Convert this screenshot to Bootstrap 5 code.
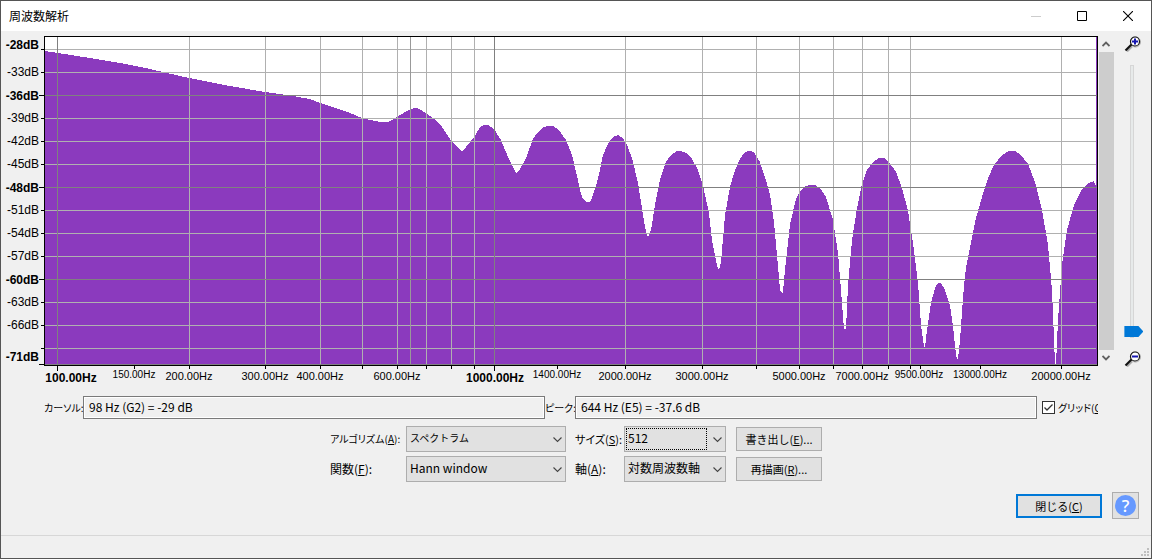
<!DOCTYPE html>
<html lang="ja">
<head>
<meta charset="utf-8">
<meta name="viewport" content="width=device-width, initial-scale=1">
<title>周波数解析</title>
<link href="https://cdn.jsdelivr.net/npm/bootstrap@5.3.0/dist/css/bootstrap.min.css" rel="stylesheet">
<style>
  body { background: #f0f0f0; color: #000; font: 12px/16px "Noto Sans CJK JP", sans-serif; font-feature-settings: "palt"; }
  .window-frame { border: 1px solid #555; }
  .title-bar { background: #fff; height: 30px; padding-left: 8px; }
  .title-bar h1 { font-size: 12px; line-height: 16px; font-weight: 400; font-feature-settings: normal; }
  .title-bar button { width: 46px; height: 30px; border: 0; padding: 0; background: none; display: flex; align-items: center; justify-content: center; }
  .chart-row { padding-top: 5px; }
  .spectrum { display: block; min-width: 0; flex: 1 1 0; height: auto; }
  .spectrum text { font-size: 12px; font-family: "Liberation Sans", sans-serif; }
  .spectrum .hz text { font-size: 11px; }
  .spectrum .major, .spectrum .hz .major { font-size: 12px; font-weight: 700; }
  .spectrum .hz .tiny { font-size: 10px; }
  .side-tools { width: 53px; padding-bottom: 20px; padding-left: 1px; }
  .pan-bar { width: 15px; }
  .pan-bar button { height: 16px; border: 0; padding: 0; background: none; display: flex; align-items: center; justify-content: center; }
  .pan-thumb { background: #cdcdcd; }
  .zoom-col { width: 38px; margin-bottom: -1px; }
  .zoom-col input { appearance: none; writing-mode: vertical-lr; direction: rtl; width: 20px; background: none; margin: 13px 0; min-height: 0; }
  .zoom-col input::-webkit-slider-runnable-track { width: 4px; background: #e7eaea; border: 1px solid #d6d6d6; }
  .zoom-col input::-webkit-slider-thumb { appearance: none; width: 19px; height: 11px; margin-left: -7px; background: #0078d7; clip-path: polygon(0 0, 74% 0, 100% 50%, 74% 100%, 0 100%); }
  .readouts { margin: 10px 53px 0 43px; height: 23px; overflow: hidden; }
  .readouts label { white-space: nowrap; font-size: 10px; flex: none; }
  .readouts input[type=text] { height: 23px; min-width: 0; flex: 1 1 0; border: 1px solid #7a7a7a; box-shadow: inset 0 0 0 1px #fff; background: #f0f0f0; padding: 0 5px 2px; border-radius: 0; color: #000; }
  .lab-cursor { width: 39px; }
  .lab-peak { width: 30px; }
  .grid-toggle { width: 61px; padding-left: 5px; overflow: hidden; gap: 3px; }
  .grid-toggle input { appearance: none; flex: none; width: 13px; height: 13px; margin: 0; border: 1px solid #333; background: #fff url("data:image/svg+xml,%3Csvg xmlns='http://www.w3.org/2000/svg' viewBox='0 0 11 11'%3E%3Cpath d='M1.5 5.5 4 8 9.5 2.5' fill='none' stroke='%23333' stroke-width='1.3'/%3E%3C/svg%3E"); }
  .settings { display: grid; grid-template-columns: 76px 160px 58px 102px 96px; row-gap: 4px; justify-content: center; align-items: center; margin-top: 7px; }
  .settings label { white-space: nowrap; }
  .settings .second { padding-left: 9px; }
  .kana { font-size: 11px; }
  .kana-tight { font-size: 10px; }
  .combo { position: relative; }
  .combo select { appearance: none; width: 100%; height: 26px; border: 1px solid #adadad; border-radius: 0; background: #e1e1e1; color: #000; padding: 0 20px 2px 3px; line-height: 16px; }
  .combo svg { position: absolute; right: 4px; top: 10px; pointer-events: none; }
  .focus-ring-box { position: absolute; left: 2px; top: 2px; right: 19px; bottom: 2px; border: 1px dotted #000; pointer-events: none; }
  .push { width: 86px; height: 24px; border: 1px solid #adadad; background: #e1e1e1; border-radius: 0; padding: 0; font-size: 11px; line-height: 16px; color: #000; white-space: nowrap; }
  .settings .push { margin-left: 10px; }
  .push.default-push { border: 2px solid #0078d7; }
  .help-push { width: 27px; height: 27px; }
  .help-push span { display: block; width: 21px; height: 21px; margin: auto; border-radius: 50%; background: #69f; color: #fff; font: 500 17px/21px "Noto Sans", sans-serif; }
  .closing { padding: 10px 12px 0; gap: 10px; }
  .status-strip { height: 23px; border-top: 1px solid #d7d7d7; }
</style>
</head>
<body>
<div class="window-frame min-vh-100 d-flex flex-column">
  <header class="title-bar d-flex align-items-center">
    <h1 class="mb-0 me-auto">周波数解析</h1>
    <button type="button" aria-label="最小化"><svg width="10" height="10"><path d="M0 5.5H10" stroke="#ccc"/></svg></button>
    <button type="button" aria-label="最大化"><svg width="10" height="10"><path d="M.5.5h9v9h-9z" fill="none" stroke="#000"/></svg></button>
    <button type="button" aria-label="閉じる"><svg width="10" height="10"><path d="M0 0 10 10M10 0 0 10" stroke="#000" stroke-width="1.1"/></svg></button>
  </header>

  <main>
    <div class="chart-row d-flex">
      <svg class="spectrum" viewBox="1 36 1097 350" role="img" aria-label="スペクトラム">
        <rect x="44" y="36" width="1054" height="330" fill="#fff"/>
        <path fill="#8b3abe" shape-rendering="crispEdges" d="M45 365V51L58 53 90 58 120 63 150 69 189 78 230 86 265 92 293 96 310 99 320 103 335 108 350 113 362 118 375 121 380 122 388 122 392 120 397 117 405 112 413 108.500 415 108 418 108.500 426 113 433 118 440 124 450 139 457 147 462 151 466 147 474 137 481 126 485 125 488 125 494 129 501 140 508 157 514 169 516 173 519 171 526 158 533 139 538 132 543 127 548 126 553 126 558 129 566 140 572 155 577 176 580 190 583 199 586 202 590 202 592 198 596 186 600 170 603 155 608 144 613 137 618 135 623 138 627 145 632 158 638 183 643 215 646 232 647 236 649 236 651 230 655 205 660 180 666 162 671 155 676 151.500 681 151 686 153 692 159 698 170 703 186 709 213 712 240 716 261 718 269 719 270 721 262 725 215 730 187 735 170 740 159 744 153 749 150.500 754 152 760 162 766 180 770 195 774 222 778 266 780 290 782 293 783 292 785 270 790 224 796 199 801 190 806 186 810 185 815 185 820 188 826 197 833 220 838 253 842 303 844 329 846 329 848 285 852 240 857 208 862 184 867 170 873 162 879 158 884 158 889 162 896 172 902 188 908 211 913 243 918 283 921 325 924 347 925 347 927 330 931 303 935 288 938 283 941 283 945 290 950 306 953 326 956 355 957 359 958 359 960 340 964 285 966 268 970 248 976 218 984 190 989 176 994 165 1002 155 1009 151 1015 151 1021 155 1028 164 1035 182 1042 210 1048 245 1052 290 1055 364 1056 364 1058 320 1062 265 1067 230 1074 205 1082 189 1089 183 1094 181 1095 185 1096 185V37H1097V365Z"/>
        <g fill="none" shape-rendering="crispEdges">
          <path stroke="#b0b0b0" d="M45 49.500H1096M45 72.500H1096M45 118.500H1096M45 141.500H1096M45 164.500H1096M45 210.500H1096M45 233.500H1096M45 256.500H1096M45 302.500H1096M45 325.500H1096M45 348.500H1096M189.500 37V364M265.500 37V364M320.500 37V364M362.500 37V364M397.500 37V364M426.500 37V364M451.500 37V364M474.500 37V364M625.500 37V364M702.500 37V364M756.500 37V364M799.500 37V364M833.500 37V364M862.500 37V364M888.500 37V364M910.500 37V364M1061.500 37V364"/>
          <path stroke="#999" d="M410.500 37V364"/>
          <path stroke="#808080" d="M45 95.500H1097M45 187.500H1097M45 279.500H1097M45 364.500H1097M57.500 37V364M494.500 37V364"/>
          <path stroke="#000" d="M44.500 36.500H1097.500V365.500H44.500ZM41 49.500H44M41 72.500H44M39 95.500H44M41 118.500H44M41 141.500H44M41 164.500H44M39 187.500H44M41 210.500H44M41 233.500H44M41 256.500H44M39 279.500H44M41 302.500H44M41 325.500H44M41 348.500H44M39 364.500H44M57.500 366V371M134.500 366V369M189.500 366V369M265.500 366V369M320.500 366V369M362.500 366V369M397.500 366V369M426.500 366V369M451.500 366V369M474.500 366V369M494.500 366V371M557.500 366V369M625.500 366V369M702.500 366V369M756.500 366V369M799.500 366V369M833.500 366V369M862.500 366V369M888.500 366V369M910.500 366V369M920.500 366V369M980.500 366V369M1061.500 366V369"/>
        </g>
        <g text-anchor="end">
          <text class="major" x="39" y="49">-28dB</text>
          <text x="39" y="76">-33dB</text>
          <text class="major" x="39" y="100">-36dB</text>
          <text x="39" y="122">-39dB</text>
          <text x="39" y="145">-42dB</text>
          <text x="39" y="168">-45dB</text>
          <text class="major" x="39" y="192">-48dB</text>
          <text x="39" y="214">-51dB</text>
          <text x="39" y="237">-54dB</text>
          <text x="39" y="260">-57dB</text>
          <text class="major" x="39" y="284">-60dB</text>
          <text x="39" y="306">-63dB</text>
          <text x="39" y="329">-66dB</text>
          <text class="major" x="39" y="361">-71dB</text>
        </g>
        <g class="hz" text-anchor="middle">
          <text class="major" x="71" y="382">100.00Hz</text>
          <text class="tiny" x="134" y="378">150.00Hz</text>
          <text x="189" y="380">200.00Hz</text>
          <text x="265" y="380">300.00Hz</text>
          <text x="320" y="380">400.00Hz</text>
          <text x="397" y="380">600.00Hz</text>
          <text class="major" x="495" y="382">1000.00Hz</text>
          <text class="tiny" x="557" y="378">1400.00Hz</text>
          <text x="625" y="380">2000.00Hz</text>
          <text x="702" y="380">3000.00Hz</text>
          <text x="799" y="380">5000.00Hz</text>
          <text x="862" y="380">7000.00Hz</text>
          <text class="tiny" x="919" y="378">9500.00Hz</text>
          <text class="tiny" x="980" y="378">13000.00Hz</text>
          <text x="1061" y="380">20000.00Hz</text>
        </g>
      </svg>

      <div class="side-tools d-flex flex-shrink-0">
        <div class="pan-bar d-flex flex-column">
          <button type="button" aria-label="上へ"><svg width="8" height="6"><path d="M.5 5 4 1.500 7.500 5" fill="none" stroke="#606060" stroke-width="1.8"/></svg></button>
          <div class="pan-thumb flex-grow-1"></div>
          <button type="button" aria-label="下へ"><svg width="8" height="6"><path d="M.5 1 4 4.500 7.500 1" fill="none" stroke="#606060" stroke-width="1.8"/></svg></button>
        </div>
        <div class="zoom-col d-flex flex-column align-items-center justify-content-between">
          <svg width="17" height="16" viewBox="0 0 17 16"><path d="M3 15.500 8 10.500" stroke="#aaa" stroke-width="2"/><circle cx="11.500" cy="6" r="5" fill="none" stroke="#aaa"/><path d="M1.500 14.500 7.500 8.500" stroke="#111" stroke-width="2.200"/><circle cx="11" cy="5.500" r="4.500" fill="#fff" stroke="#111" stroke-width="1.200"/><path d="M8 5.500h6M11 2.500v6" stroke="#1616b0" stroke-width="2"/></svg>
          <input type="range" class="flex-grow-1" min="0" max="100" value="0" aria-label="ズーム">
          <svg width="17" height="16" viewBox="0 0 17 16"><path d="M3 15.500 8 10.500" stroke="#aaa" stroke-width="2"/><circle cx="11.500" cy="6" r="5" fill="none" stroke="#aaa"/><path d="M1.500 14.500 7.500 8.500" stroke="#111" stroke-width="2.200"/><circle cx="11" cy="5.500" r="4.500" fill="#fff" stroke="#111" stroke-width="1.200"/><path d="M8 5.500h6" stroke="#1616b0" stroke-width="2"/></svg>
        </div>
      </div>
    </div>

    <div class="readouts d-flex align-items-center">
      <label class="lab-cursor" for="cursor">カーソル:</label>
      <input type="text" id="cursor" value="98 Hz (G2) = -29 dB" readonly>
      <label class="lab-peak" for="peak">ピーク:</label>
      <input type="text" id="peak" value="644 Hz (E5) = -37.6 dB" readonly>
      <div class="grid-toggle d-flex align-items-center flex-shrink-0">
        <input type="checkbox" id="gridlines" checked>
        <label for="gridlines">グリッド(<u>G</u>)</label>
      </div>
    </div>

    <div class="settings">
      <label class="kana-tight" for="algo">アルゴリズム(<u>A</u>):</label>
      <div class="combo"><select id="algo" class="kana-tight"><option>スペクトラム</option></select><svg width="9" height="7"><path d="M.5 1.500 4.500 5.500 8.500 1.500" fill="none" stroke="#444" stroke-width="1.100"/></svg></div>
      <label class="second kana" for="size">サイズ(<u>S</u>):</label>
      <div class="combo"><select id="size"><option>512</option></select><div class="focus-ring-box"></div><svg width="9" height="7"><path d="M.5 1.500 4.500 5.500 8.500 1.500" fill="none" stroke="#444" stroke-width="1.100"/></svg></div>
      <button type="button" class="push">書き出し(<u>E</u>)...</button>

      <label for="func">関数(<u>F</u>):</label>
      <div class="combo"><select id="func"><option>Hann window</option></select><svg width="9" height="7"><path d="M.5 1.500 4.500 5.500 8.500 1.500" fill="none" stroke="#444" stroke-width="1.100"/></svg></div>
      <label class="second" for="axis">軸(<u>A</u>):</label>
      <div class="combo"><select id="axis"><option>対数周波数軸</option></select><svg width="9" height="7"><path d="M.5 1.500 4.500 5.500 8.500 1.500" fill="none" stroke="#444" stroke-width="1.100"/></svg></div>
      <button type="button" class="push">再描画(<u>R</u>)...</button>
    </div>

    <div class="closing d-flex justify-content-end align-items-center">
      <button type="button" class="push default-push">閉じる(<u>C</u>)</button>
      <button type="button" class="push help-push" aria-label="ヘルプ"><span>?</span></button>
    </div>
  </main>

  <footer class="status-strip mt-auto d-flex justify-content-end align-items-end">
    <svg width="10" height="10" viewBox="0 0 10 10" fill="#bfbfbf"><path d="M6 0h2v2h-2zM3 3h2v2h-2zM6 3h2v2h-2zM0 6h2v2h-2zM3 6h2v2h-2zM6 6h2v2h-2z"/></svg>
  </footer>
</div>
<script src="https://cdn.jsdelivr.net/npm/bootstrap@5.3.0/dist/js/bootstrap.bundle.min.js"></script>
</body>
</html>
